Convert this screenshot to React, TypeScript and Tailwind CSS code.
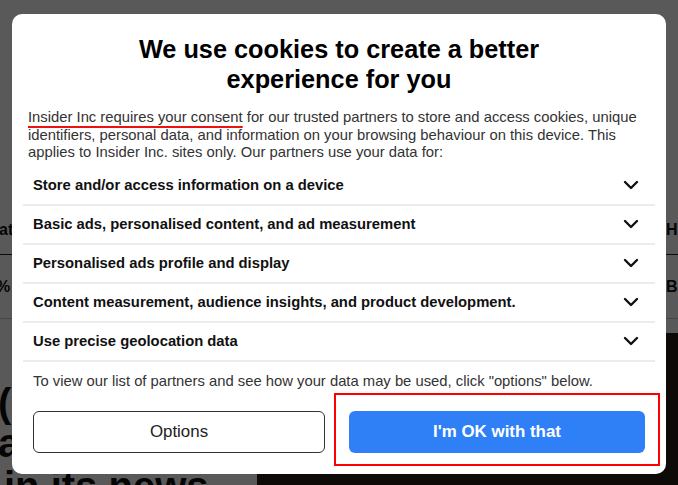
import React from 'react';
import {ChevronDown} from "lucide-react";

const purposes = [
  "Store and/or access information on a device",
  "Basic ads, personalised content, and ad measurement",
  "Personalised ads profile and display",
  "Content measurement, audience insights, and product development.",
  "Use precise geolocation data",
];

function BackgroundPage() {
  return (
    <div className="absolute inset-0 flex flex-col bg-white">
      <div className="h-[205px] shrink-0"/>
      <div className="h-[50px] shrink-0 flex items-center border-b border-[#222] font-bold text-[16px] text-[#111]">
        <span className="-ml-[1px]">at</span>
        <span className="ml-auto w-[12px] whitespace-nowrap">HAS</span>
      </div>
      <div className="h-[64px] shrink-0 flex items-center border-b border-[#ccc] font-bold text-[16px] text-[#111]">
        <span className="-ml-[4px]">%</span>
        <span className="ml-auto w-[12px] whitespace-nowrap">BAR</span>
      </div>
      <div className="h-[200px] shrink-0 flex">
        <div className="w-[257px] pt-[64px] text-[40px] leading-[40px] font-bold text-[#111] whitespace-nowrap">
          <div className="-ml-[2px]">(</div>
          <div className="-ml-[2px]">a</div>
          <div className="ml-[4px] mt-[3px]">in its news</div>
        </div>
        <div className="flex-1 pt-[14px] flex flex-col">
          <div className="flex-1 bg-[#2a1e18]"/>
        </div>
      </div>
    </div>
  );
}

function PurposeRow({title}: { title: string }) {
  return (
    <div className="h-[39px] flex items-center justify-between border-b-2 border-[#ececec] pl-[10px] pr-[12px]">
      <span className="font-bold text-[14.8px] text-[#111]">{title}</span>
      <ChevronDown size={24} strokeWidth={2.4} className="text-[#111]"/>
    </div>
  );
}

export default function App() {
  return (
    <div className="relative w-[678px] h-[485px] overflow-hidden" style={{fontFamily: '"Liberation Sans", Arial, sans-serif'}}>
      <BackgroundPage/>
      <div className="absolute inset-0 bg-black/65"/>

      <div className="absolute left-[12px] top-[14px] w-[654px] bg-white rounded-[10px] px-[11px] pt-[20px] pb-[21px]">
        <h1 className="max-w-[470px] mx-auto text-center font-bold text-[25.3px] leading-[30px] text-black">
          We use cookies to create a better experience for you
        </h1>
        <p className="mt-[15px] px-[5px] text-[14.8px] leading-[17.5px] text-[#333]">
          <span className="underline decoration-[#e11] decoration-2 underline-offset-[4px]">Insider Inc requires your consent</span> for
          our trusted partners to store and access cookies, unique identifiers, personal data, and information on your
          browsing behaviour on this device. This applies to Insider Inc. sites only. Our partners use your data for:
        </p>
        <div className="mt-[5px]">
          {purposes.map((p, idx) => (
            <PurposeRow key={idx} title={p}/>
          ))}
        </div>
        <p className="mt-[11px] px-[10px] text-[14.8px] leading-[17.5px] text-[#333]">
          To view our list of partners and see how your data may be used, click "options" below.
        </p>
        <div className="mt-[21px] px-[10px] flex gap-[24px]">
          <button className="w-[292px] h-[42px] rounded-[6px] border border-[#333] bg-white text-[16.9px] text-[#222]">
            Options
          </button>
          <button className="flex-1 h-[42px] rounded-[6px] bg-[#2f80f6] text-[16.9px] font-bold text-white">
            I'm OK with that
          </button>
        </div>
      </div>

      <div className="absolute left-[334px] top-[393px] w-[326px] h-[73px] border-2 border-[#f00]"/>
    </div>
  );
}
